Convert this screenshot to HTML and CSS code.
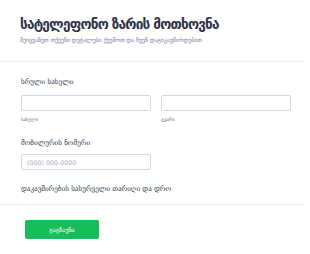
FILE: index.html
```html
<!DOCTYPE html>
<html>
<head>
<meta charset="utf-8">
<link rel="stylesheet" href="styles.css">
</head>
<body>
<div class="form">
  <header class="head">
    <h1 class="title">სატელეფონო ზარის მოთხოვნა</h1>
    <p class="subtitle">შეიყვანეთ თქვენი დეტალები ქვემოთ და ჩვენ დაგიკავშირდებით</p>
  </header>
  <section class="body">
    <div class="field">
      <div class="label">სრული სახელი</div>
      <div class="row">
        <div class="col"><div class="input"></div><div class="sub">სახელი</div></div>
        <div class="col"><div class="input"></div><div class="sub">გვარი</div></div>
      </div>
    </div>
    <div class="field phone">
      <div class="label">მობილურის ნომერი</div>
      <div class="input half"><span class="ph">(000) 000-0000</span></div>
    </div>
    <div class="field last">
      <div class="label">დაკავშირების სასურველი თარიღი და დრო</div>
    </div>
  </section>
  <footer class="foot">
    <button class="btn">გაგზავნა</button>
  </footer>
</div>
</body>
</html>
```
FILE: styles.css
```css
html, body { margin: 0; padding: 0; background: #fff; }
body { font-family: "DejaVu Sans", sans-serif; color: #2c3345; width: 310px; overflow: hidden; }
.form { width: 305px; }
.head { padding: 14px 20px 0 20px; height: 47px; border-bottom: 1px solid #eceef3; }
.title { margin: 0; font-size: 13.6px; font-weight: 600; line-height: 20px; color: #2c3345; letter-spacing: -0.8px; }
.subtitle { margin: 1px 0 0 0; font-size: 6px; line-height: 9px; color: #7a7f99; letter-spacing: -0.1px; }
.body { padding: 15px 0 0 21px; height: 127px; border-bottom: 1px solid #eceef3; }
.label { font-size: 7.1px; line-height: 10px; color: #2c3345; }
.row { display: flex; gap: 10px; margin-top: 8px; }
.col { width: 130px; }
.input { height: 14px; border: 1px solid #d3d6e4; border-radius: 2px; background: #fff; box-sizing: content-box; width: 128px; }
.sub { font-size: 4.7px; line-height: 8px; margin-top: 5px; color: #57647e; }
.phone { margin-top: 14px; }
.phone .input { margin-top: 6px; display: flex; align-items: center; padding-left: 5px; width: 123px; }
.ph { font-size: 6.3px; color: #a5a9bd; }
.last { margin-top: 14px; }
.foot { padding: 12px 0 0 25px; }
.btn { width: 74px; height: 19px; border: none; border-radius: 2px; background: #18bd5b; color: #fff; font-family: "DejaVu Sans", sans-serif; font-size: 6px; padding: 0; }
```
